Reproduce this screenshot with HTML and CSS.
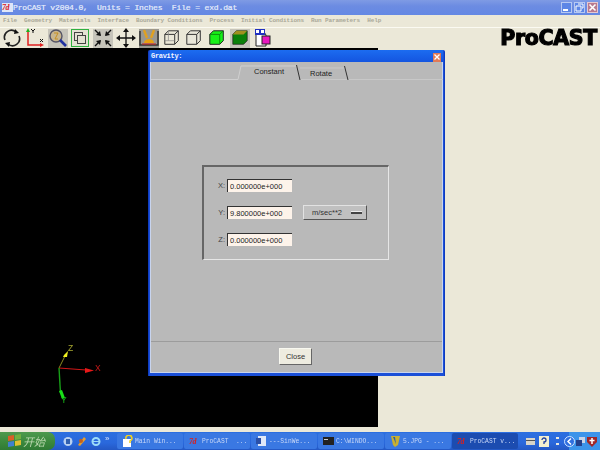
FILE: index.html
```html
<!DOCTYPE html>
<html lang="en">
<head>
<meta charset="utf-8">
<title>ProCAST</title>
<link rel="stylesheet" href="styles.css">
</head>
<body>
<div class="app">
  <header class="titlebar">
    <span class="app-logo">7d</span>
    <span class="title-text">ProCAST v2004.0,  Units = Inches  File = exd.dat</span>
    <span class="win-buttons">
      <span class="win-btn"><svg width="11" height="11" viewBox="0 0 11 11"><rect x="2" y="7" width="5" height="2" fill="#fff"/></svg></span>
      <span class="win-btn"><svg width="11" height="11" viewBox="0 0 11 11"><path d="M4 2h5v4H8M2 4h5v5H2z" fill="none" stroke="#fff"/></svg></span>
      <span class="win-btn win-close"><svg width="11" height="11" viewBox="0 0 11 11"><path d="M2.5 2.5l6 6M8.5 2.5l-6 6" stroke="#fff" stroke-width="1.6"/></svg></span>
    </span>
  </header>
  <nav class="menubar">
    <span>File</span><span>Geometry</span><span>Materials</span><span>Interface</span><span>Boundary Conditions</span><span>Process</span><span>Initial Conditions</span><span>Run Parameters</span><span>Help</span>
  </nav>
  <div class="toolbar">
    <span class="tool"><svg width="20" height="20" viewBox="0 0 20 20"><path d="M3 12A7 7 0 0 1 14 4M17 8A7 7 0 0 1 6 16" fill="none" stroke="#222" stroke-width="1.6"/><path d="M13 1l4 4-5 1zM7 19l-4-4 5-1z" fill="#111"/></svg></span>
    <span class="tool"><svg width="20" height="20" viewBox="0 0 20 20"><path d="M3 2v15h13" fill="none" stroke="#e02020" stroke-width="1.5"/><path d="M3 0l-2 4h4z" fill="#20b020"/><path d="M19 17l-4-2v4z" fill="#e02020"/><path d="M6 1l2 2 2-2M8 3v2M15 11l3 3M18 11l-3 3" stroke="#111" fill="none"/></svg></span>
    <span class="tool tool-on"><svg width="20" height="20" viewBox="0 0 20 20"><circle cx="8" cy="8" r="6" fill="#c9b68e" stroke="#556" stroke-width="1.4"/><path d="M12 12l6 6" stroke="#2030a0" stroke-width="2.6"/><path d="M6 5h4l-3 6h3" fill="none" stroke="#c89020"/></svg></span>
    <span class="tool"><svg width="18" height="18" viewBox="0 0 18 18"><rect x=".5" y=".5" width="17" height="17" fill="#e4e2d4" stroke="#30b040"/><rect x="3.500" y="3.500" width="8" height="8" fill="none" stroke="#444"/><rect x="6.500" y="6.500" width="8" height="8" fill="#e4e2d4" stroke="#444"/></svg></span>
    <span class="tool tool-on"><svg width="20" height="20" viewBox="0 0 20 20"><path d="M2 2l5 5M18 2l-5 5M2 18l5-5M18 18l-5-5" stroke="#111" stroke-width="1.4"/><path d="M8 8L3 7l4-4zM12 8l5-1-4-4zM8 12l-5 1 4 4zM12 12l5 1-4 4z" fill="#111"/></svg></span>
    <span class="tool"><svg width="20" height="20" viewBox="0 0 20 20"><path d="M10 2v16M2 10h16" stroke="#111" stroke-width="1.3"/><path d="M10 0l-3 4h6zM10 20l-3-4h6zM0 10l4-3v6zM20 10l-4-3v6z" fill="#111"/></svg></span>
    <span class="tool tool-dark"><svg width="20" height="19" viewBox="0 0 20 19"><path d="M1 2v14h18V2" fill="none" stroke="#333" stroke-width="1.5"/><path d="M5 1l3 8M15 1l-3 8" stroke="#e0a020" stroke-width="2.4"/><path d="M5 14a5 4 0 0 1 10 0z" fill="#e8a010"/><path d="M3 15h14" stroke="#d02020"/></svg></span>
    <span class="tool"><svg width="18" height="18" viewBox="0 0 20 20"><path d="M2 6l4-4h11v11l-4 4H2zM2 6h11v11M13 6l4-4" fill="none" stroke="#333" stroke-width="1.1"/><path d="M6 2v11H2M6 13h7" fill="none" stroke="#888" stroke-width=".8"/></svg></span>
    <span class="tool"><svg width="18" height="18" viewBox="0 0 20 20"><path d="M2 6l4-4h11v11l-4 4H2zM2 6h11v11M13 6l4-4" fill="#e8e6da" stroke="#333" stroke-width="1.1"/></svg></span>
    <span class="tool"><svg width="18" height="18" viewBox="0 0 20 20"><path d="M2 6l4-4h11v11l-4 4H2z" fill="#18f018" stroke="#222" stroke-width="1.1"/><path d="M2 6h11v11M13 6l4-4" fill="none" stroke="#0a8a0a"/></svg></span>
    <span class="tool tool-on"><svg width="18" height="18" viewBox="0 0 20 20"><path d="M2 6l4-4h12v11l-4 4H2z" fill="#0a800a" stroke="#222" stroke-width=".8"/><path d="M2 6l4-4h12l-4 4z" fill="#a09020"/></svg></span>
    <span class="tool"><svg width="20" height="20" viewBox="0 0 20 20"><path d="M3 4h8l2 3v11H3z" fill="#fff" stroke="#222"/><rect x="2" y="1" width="10" height="6" fill="#2030c0"/><rect x="3" y="2" width="3" height="3" fill="#fff"/><rect x="8" y="2" width="3" height="3" fill="#fff"/><rect x="9" y="8" width="8" height="8" fill="#e818c0" stroke="#222"/></svg></span>
    <span class="brand">ProCAST</span>
  </div>
  <main class="workspace">
    <div class="canvas">
      <svg class="axes" width="70" height="80" viewBox="0 -10 70 80">
        <path d="M15 21L22 7" stroke="#8a8a20" stroke-width="1"/>
        <path d="M24 4l-1 6-4 0 1-2z" fill="#f0f020"/>
        <path d="M15 21L42 23" stroke="#d01818" stroke-width="1"/>
        <path d="M50 23.500l-9-2.500v5z" fill="#e81818"/>
        <path d="M15 21L16.500 46" stroke="#18a018" stroke-width="1.400"/>
        <path d="M15 44l3-1 3 8-3 1z" fill="#18e018"/>
        <text x="24" y="4" class="axis-label axis-z">Z</text>
        <text x="51" y="24" class="axis-label axis-x">X</text>
        <text x="17" y="56" class="axis-label axis-y">Y</text>
      </svg>
    </div>
    <section class="dialog">
      <div class="dialog-title">
        <span class="dialog-name">Gravity:</span>
        <span class="dialog-close"><svg width="8" height="8" viewBox="0 0 8 8"><path d="M1.5 1.5l5 5M6.5 1.5l-5 5" stroke="#fff" stroke-width="1.3"/></svg></span>
      </div>
      <div class="dialog-inner">
        <div class="tabs">
          <svg class="tab-lines" width="292" height="19" viewBox="0 0 292 19">
            <path d="M0 17.5H87L90 4H146" fill="none" stroke="#d0d0d0"/>
            <path d="M149 17.5H292M149 6H194" fill="none" stroke="#c8c8c8"/>
            <path d="M145.500 3L149 18M193.500 4L197 18" fill="none" stroke="#333" stroke-width="1"/>
          </svg>
          <span class="tab tab-active">Constant</span>
          <span class="tab tab-idle">Rotate</span>
        </div>
        <div class="dialog-body">
          <div class="group">
            <div class="field"><label class="field-label">X:</label><input class="field-input" value="0.000000e+000"></div>
            <div class="field"><label class="field-label">Y:</label><input class="field-input" value="9.800000e+000"><button class="unit-btn"><span>m/sec**2</span><i class="unit-mark"></i></button></div>
            <div class="field"><label class="field-label">Z:</label><input class="field-input" value="0.000000e+000"></div>
          </div>
        </div>
        <div class="dialog-foot"><button class="close-btn">Close</button></div>
      </div>
    </section>
  </main>
  <div class="strip"></div>
  <footer class="taskbar">
    <div class="start"><svg width="15" height="14" viewBox="0 0 15 14"><path d="M1 2l6-1v5l-6 1z" fill="#d86028"/><path d="M8 1l6-1v5l-6 1z" fill="#70b040"/><path d="M1 8l6-1v5l-6 1z" fill="#4080d0"/><path d="M8 7l6-1v5l-6 1z" fill="#e0c030"/></svg><span class="start-text">开始</span></div>
    <div class="quick">
      <svg width="10" height="11" viewBox="0 0 10 11"><circle cx="5" cy="5.500" r="4.500" fill="#b8d0f0"/><rect x="3" y="3" width="4" height="5" fill="#3060b0"/></svg>
      <svg width="10" height="11" viewBox="0 0 10 11"><path d="M1 9L7 1l2 2-6 7z" fill="#e8a030"/><circle cx="4" cy="5" r="2" fill="#c06020"/></svg>
      <svg width="10" height="11" viewBox="0 0 10 11"><circle cx="5" cy="5.500" r="3.500" fill="none" stroke="#9cdcf8" stroke-width="2"/><path d="M2 5.500h6" stroke="#9cdcf8"/></svg>
      <span class="chev">»</span>
    </div>
    <div class="task"><svg width="11" height="12" viewBox="0 0 11 12"><rect x="1" y="4" width="8" height="8" fill="#fff"/><path d="M4 4a3 3 0 1 1 4 2v2" fill="none" stroke="#f0d020" stroke-width="1.6"/></svg><span>Main Win...</span></div>
    <div class="task"><span class="task-logo">7d</span><span>ProCAST  ...</span></div>
    <div class="task"><svg width="11" height="12" viewBox="0 0 11 12"><rect x="2" y="1" width="8" height="10" fill="#dfe8f8"/><rect x="0" y="3" width="5" height="6" fill="#2a50a8"/></svg><span>---SinWe...</span></div>
    <div class="task"><svg width="11" height="12" viewBox="0 0 11 12"><rect y="2" width="11" height="8" fill="#222"/><rect x="1" y="4" width="4" height="1" fill="#ccc"/></svg><span>C:\WINDO...</span></div>
    <div class="task"><svg width="11" height="12" viewBox="0 0 11 12"><path d="M1 1h9l-2 9-3 2-2-2z" fill="#c8b030"/><path d="M3 2h2l1 7z" fill="#3060a0"/></svg><span>5.JPG - ...</span></div>
    <div class="task task-active"><span class="task-logo">7d</span><span>ProCAST v...</span></div>
    <div class="tray">
      <svg width="9" height="7" viewBox="0 0 9 7"><rect width="9" height="7" fill="#d8d4c8"/><rect y="2" width="9" height="1" fill="#555"/></svg>
      <svg width="10" height="11" viewBox="0 0 10 11"><rect width="10" height="11" fill="#f4f0d0"/><path d="M3 4a2 2 0 1 1 2 2v2" fill="none" stroke="#2040a0" stroke-width="1.300"/></svg>
      <span class="tray-dots"><i></i><i></i></span>
    </div>
    <div class="tray-light">
      <svg class="tray-chevron" width="11" height="11" viewBox="0 0 11 11"><circle cx="5.500" cy="5.500" r="5" fill="#2f6fe0" stroke="#cfe4ff"/><path d="M7 2.500L4 5.500l3 3" fill="none" stroke="#fff" stroke-width="1.500"/></svg>
      <svg width="10" height="11" viewBox="0 0 10 11"><rect x="3" y="1" width="6" height="6" fill="#c8d4e8"/><rect x="0" y="4" width="6" height="6" fill="#24408c"/></svg>
      <svg width="10" height="11" viewBox="0 0 10 11"><path d="M0 1h10v5l-5 5-5-5z" fill="#a02828"/><path d="M5 2v6M2.500 4.500h5" stroke="#fff" stroke-width="1.500"/></svg>
    </div>
  </footer>
</div>
</body>
</html>
```
FILE: styles.css
```css
* { box-sizing: border-box; }
html, body { margin: 0; padding: 0; }
body { width: 600px; height: 450px; overflow: hidden; background: #ebe8d8; }
.app { display: flex; flex-direction: column; width: 600px; height: 450px; filter: blur(0.35px); }

.titlebar { height: 15px; display: flex; align-items: center; padding: 0 2px; background: linear-gradient(#7f9be4, #6c8ce2 40%, #6488e4); color: #eef2fb; }
.app-logo { width: 11px; font: italic bold 8px "Liberation Serif", serif; color: #d81818; letter-spacing: -0.5px; background: #dfe6f8; height: 9px; line-height: 9px; }
.title-text { font: 8px/15px "Liberation Mono", monospace; letter-spacing: -0.13px; white-space: pre; color: #e8eefb; -webkit-text-stroke: 0.2px #e8eefb; }
.win-buttons { margin-left: auto; display: flex; gap: 2px; }
.win-btn { width: 11px; height: 11px; display: block; background: #5d86e6; border: 1px solid #b6c8f2; }
.win-btn svg { display: block; margin: -1px; }
.win-close { background: #b87a90; border-color: #e6c8d0; }

.menubar { height: 12px; display: flex; gap: 7px; padding-left: 3px; align-items: center; background: #ebe8d8; font: bold 6px/12px "Liberation Mono", monospace; color: #aaa899; letter-spacing: -0.1px; white-space: nowrap; }

.toolbar { height: 21px; display: flex; align-items: center; padding-left: 2px; gap: 2.800px; background: #ebe8d8; border-top: 1px solid #fbfaf2; }
.tool { width: 20px; height: 19px; display: flex; align-items: center; justify-content: center; }
.tool svg { display: block; }
.tool-on { background: #c6c4ba; }
.tool-dark { background: #9a9890; }
.brand { margin-left: auto; margin-right: 3px; font: bold 20.500px/20px "DejaVu Sans", sans-serif; color: #000; -webkit-text-stroke: 1.200px #000; letter-spacing: -0.300px; }

.workspace { height: 379px; position: relative; display: flex; background: #ebe8d8; }
.canvas { width: 378px; height: 379px; background: #000; position: relative; }
.axes { position: absolute; left: 44px; top: 289px; }
.axis-label { font: 8.500px "Liberation Sans", sans-serif; }
.axis-z { fill: #a8a830; }
.axis-x { fill: #c81818; }
.axis-y { fill: #18c018; }

.dialog { position: absolute; left: 148px; top: 2px; width: 297px; height: 326px; background: #1a4fd8; padding: 0 1px 3px 1px; display: flex; flex-direction: column; border-radius: 2px 2px 0 0; border-right: 1px solid #0f3cc0; border-left: 1px solid #0f3cc0; }
.dialog-title { height: 12px; flex: none; display: flex; align-items: center; justify-content: space-between; padding: 0 2px 0 1px; background: linear-gradient(#1c6cf0, #1455e0); }
.dialog-name { font: bold 7px/12px "Liberation Mono", monospace; color: #f0f4ff; letter-spacing: -0.300px; }
.dialog-close { width: 8px; height: 9px; background: #e07a58; margin-top: 2px; display: block; }
.dialog-close svg { display: block; }
.dialog-inner { flex: 1; display: flex; flex-direction: column; background: #b9b9b9; border: 1px solid #c8d4ee; border-top: 0; min-height: 0; }

.tabs { height: 19px; flex: none; position: relative; display: flex; font: 7.500px "Liberation Sans", sans-serif; color: #222; }
.tab-lines { position: absolute; left: 0; top: 0; }
.tab { display: block; position: relative; }
.tab-active { margin: 5px 0 0 103px; width: 56px; }
.tab-idle { margin: 7px 0 0 0; }

.dialog-body { flex: 1; padding: 84px 0 0 51px; }
.group { width: 187px; height: 95px; border: 1px solid #e6e6e6; border-top: 2px solid #666; border-left: 2px solid #666; padding-top: 12px; display: flex; flex-direction: column; gap: 14px; }
.field { display: flex; align-items: center; height: 13px; }
.field-label { width: 22px; padding-right: 1px; text-align: right; font: 7.500px "Liberation Sans", sans-serif; color: #444; }
.field-input { width: 65px; height: 13px; padding: 0 0 0 2px; border: 0; border-top: 1px solid #333; border-left: 1px solid #333; background: #fdf3ea; font: 7.500px "Liberation Sans", sans-serif; color: #222; margin-left: 1px; border-radius: 0; outline: 0; }
.unit-btn { width: 64px; height: 15px; margin-left: 11px; display: flex; align-items: center; justify-content: space-between; padding: 0 4px 0 8px; background: #c0c0c0; border: 1px solid; border-color: #e2e2e2 #555 #555 #e2e2e2; font: 7.500px "Liberation Sans", sans-serif; color: #333; border-radius: 0; }
.unit-mark { width: 11px; height: 3px; background: #444; border-top: 1px solid #eee; display: block; }

.dialog-foot { height: 31px; flex: none; border-top: 1px solid #9c9c9c; display: flex; justify-content: center; padding-top: 6px; }
.close-btn { width: 33px; height: 17px; padding: 0; background: #eeece0; border: 1px solid; border-color: #f8f8f0 #666 #666 #f8f8f0; font: 7.500px "Liberation Sans", sans-serif; color: #333; border-radius: 0; margin-right: 2px; }

.strip { height: 5px; background: #ebe8d8; }
.taskbar { height: 18px; display: flex; align-items: center; background: linear-gradient(#2c6fe0, #2a68dc 60%, #2458c4); color: #c8d8f8; font: 6.300px "Liberation Mono", monospace; white-space: pre; overflow: hidden; }
.start { width: 55px; height: 18px; display: flex; align-items: center; gap: 1px; padding-left: 7px; background: linear-gradient(#4e9a4e, #3d8a3e 50%, #2f7a34); border-radius: 0 7px 7px 0; flex: none; }
.start-text { font: italic 11px "Noto Sans CJK SC", sans-serif; color: #bcd8b0; }
.quick { width: 62px; flex: none; display: flex; align-items: center; gap: 4px; padding-left: 8px; }
.chev { font: 8px "Liberation Sans", sans-serif; color: #d8e4fb; margin-top: -6px; }
.task { width: 66px; height: 16px; flex: none; margin-right: 1px; display: flex; align-items: center; gap: 2px; padding-left: 5px; background: #3a78e2; border-radius: 2px; overflow: hidden; }
.task svg { flex: none; }
.task-active { background: #1c4cb0; }
.task-logo { font: italic bold 8px "Liberation Serif", serif; color: #d82020; letter-spacing: -0.500px; width: 11px; }
.tray { display: flex; flex: none; align-items: center; gap: 4px; padding-left: 7px; width: 50px; }
.tray-dots { display: flex; flex-direction: column; gap: 4px; padding-left: 3px; }
.tray-dots i { display: block; width: 3px; height: 2px; background: #e8e8e0; }
.tray-light { flex: 1; height: 18px; display: flex; align-items: center; gap: 1px; background: #3c94ea; }
.tray-chevron { margin-left: -5px; }
```
